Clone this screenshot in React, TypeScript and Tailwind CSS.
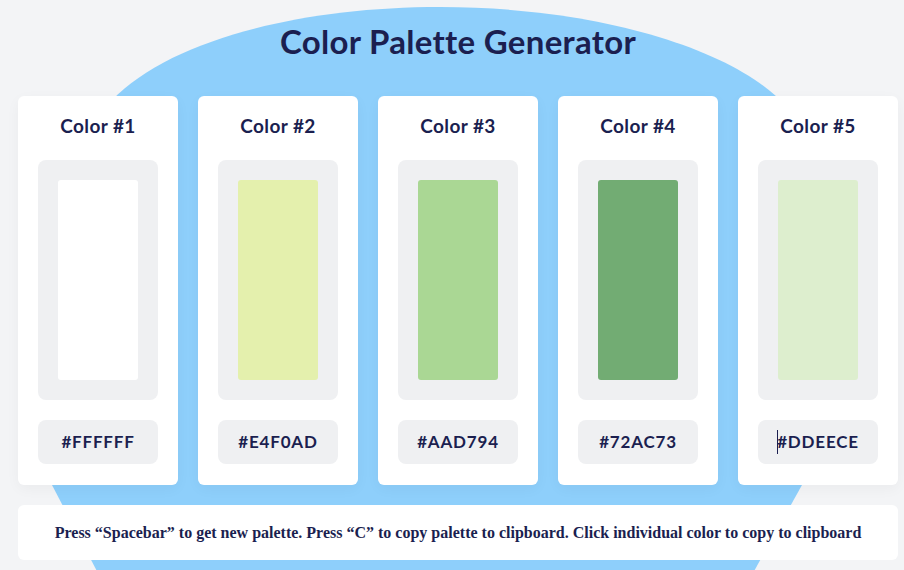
import React from "react";

const colors = [
  { name: "Color #1", hex: "#FFFFFF" },
  { name: "Color #2", hex: "#E4F0AD" },
  { name: "Color #3", hex: "#AAD794" },
  { name: "Color #4", hex: "#72AC73" },
  { name: "Color #5", hex: "#DDEECE" },
];

function Blob() {
  return (
    <svg
      className="absolute left-0 top-0 pointer-events-none"
      width="904"
      height="570"
      viewBox="0 0 904 570"
    >
      <path
        d="M 440 7 C 600 7, 735 50, 785 105 C 830 170, 830 420, 802 485 L 738 600 L 112 600 L 52 485 C 30 400, 30 200, 112 100 C 170 40, 300 7, 440 7 Z"
        fill="#8ecffb"
      />
    </svg>
  );
}

function Card({ name, hex, cursor }: { name: string; hex: string; cursor?: boolean }) {
  return (
    <div className="w-[160px] h-[389px] bg-white rounded-[6px] shadow-[0_4px_14px_rgba(0,0,0,0.04)] flex flex-col items-center">
      <div className="mt-[20px] h-[20px] flex items-center text-[19px] font-bold text-[#1b1f50] font-['Lato',sans-serif] tracking-[0.4px]">
        {name}
      </div>
      <div className="mt-[24px] w-[120px] h-[240px] bg-[#eff0f2] rounded-[8px] flex items-center justify-center">
        <div className="w-[80px] h-[200px] rounded-[3px]" style={{ backgroundColor: hex }} />
      </div>
      <div className="mt-[20px] w-[120px] h-[44px] bg-[#eff0f2] rounded-[8px] flex items-center justify-center text-[17px] font-bold text-[#1b1f50] font-['Lato',sans-serif] tracking-[0.8px]">
        {cursor && <span className="w-[1px] h-[24px] bg-[#1b1f50] mr-[-1px]" />}
        {hex}
      </div>
    </div>
  );
}

export default function App() {
  return (
    <div className="relative w-[904px] h-[570px] overflow-hidden bg-[#f3f4f6]">
      <Blob />
      <div className="relative flex flex-col pl-[18px]">
        <h1 className="w-[880px] mt-[21px] h-[42px] flex items-center justify-center text-[33px] font-bold text-[#1b1f50] font-['Lato',sans-serif] tracking-[0.3px]">
          Color Palette Generator
        </h1>
        <div className="mt-[33px] flex gap-[20px]">
          {colors.map((c, i) => (
            <Card key={c.hex} name={c.name} hex={c.hex} cursor={i === 4} />
          ))}
        </div>
        <div className="mt-[20px] w-[880px] h-[55px] bg-white rounded-[6px] flex items-center justify-center text-[16px] font-bold text-[#1b1f50] font-['Liberation_Serif',serif]">
          Press “Spacebar” to get new palette. Press “C” to copy palette to clipboard. Click individual color to copy to clipboard
        </div>
      </div>
    </div>
  );
}
